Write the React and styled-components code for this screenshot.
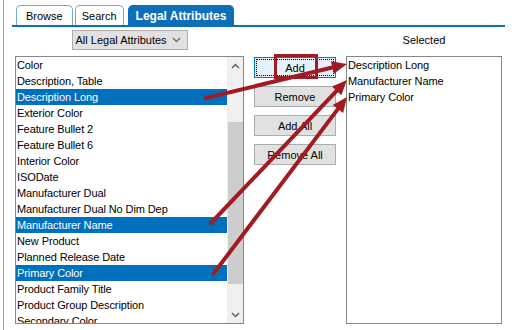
import React from 'react';
import styled, { createGlobalStyle, css } from 'styled-components';

const GlobalStyle = createGlobalStyle`
  body {
    margin: 0;
    background: #fff;
    font-family: "Liberation Sans", Arial, sans-serif;
    color: #000;
  }
`;

const Page = styled.div`
  position: relative;
  width: 512px;
  height: 330px;
  overflow: hidden;
  background: #fff;
`;

const Frame = styled.div`
  margin-left: 3px;
  height: 330px;
  border-left: 1px solid #a0a0a0;
`;

const TabBar = styled.div`
  display: flex;
  align-items: flex-end;
  gap: 2px;
  margin: 0 7px 0 8px;
  padding: 5px 0 0 4px;
  border-bottom: 2px solid #0d6fb8;
`;

const Tab = styled.div`
  height: 19px;
  padding: 0 ${({ $pad }) => $pad}px;
  display: flex;
  align-items: center;
  border: 1px solid #7aa7d2;
  border-bottom: none;
  border-radius: 5px 5px 0 0;
  background: #fff;
  font-size: 11px;
  ${({ $active }) =>
    $active &&
    css`
      margin-left: 2px;
      background: #0d6fb8;
      border-color: #0d6fb8;
      color: #fff;
      font-weight: 700;
      font-size: 12px;
    `}
`;

const Content = styled.div`
  display: grid;
  grid-template-columns: 229px 82px 156px;
  column-gap: 10px;
  row-gap: 6px;
  padding: 3px 0 0 11px;
`;

const Dropdown = styled.div`
  justify-self: center;
  width: 116px;
  height: 20px;
  box-sizing: border-box;
  display: flex;
  align-items: center;
  justify-content: space-between;
  padding: 0 6px 0 3px;
  border: 1px solid #adadad;
  background: #e1e1e1;
  font-size: 11px;
`;

const Caption = styled.div`
  justify-self: center;
  line-height: 20px;
  font-size: 11px;
`;

const ListBox = styled.div`
  height: 268px;
  box-sizing: border-box;
  display: flex;
  border: 1px solid #828790;
  background: #fff;
  overflow: hidden;
`;

const Items = styled.div`
  flex: 1;
  min-width: 0;
`;

const Item = styled.div`
  height: 16px;
  line-height: 16px;
  padding-left: 1px;
  font-size: 11px;
  letter-spacing: -0.1px;
  white-space: nowrap;
  ${({ $selected }) =>
    $selected &&
    css`
      background: #0070bd;
      color: #fff;
    `}
`;

const ScrollBar = styled.div`
  width: 16px;
  display: flex;
  flex-direction: column;
  background: #f0f0f0;
`;

const ScrollArrow = styled.div`
  height: 17px;
  display: flex;
  align-items: center;
  justify-content: center;
`;

const Track = styled.div`
  flex: 1;
  display: flex;
  flex-direction: column;
  align-items: center;
`;

const Thumb = styled.div`
  width: 15px;
  background: #cdcdcd;
`;

const ButtonColumn = styled.div`
  display: flex;
  flex-direction: column;
  gap: 8px;
  padding-top: 1px;
`;

const Button = styled.div`
  height: 21px;
  box-sizing: border-box;
  display: flex;
  align-items: center;
  justify-content: center;
  border: 1px solid #adadad;
  background: #e1e1e1;
  font-size: 11px;
  ${({ $focused }) =>
    $focused &&
    css`
      border-color: #0078d7;
      background: #e5f1fb;
      outline: 1px dotted #000;
      outline-offset: -3px;
    `}
`;

const Overlay = styled.svg`
  position: absolute;
  left: 0;
  top: 0;
  pointer-events: none;
`;

const available = [
  'Color',
  'Description, Table',
  'Description Long',
  'Exterior Color',
  'Feature Bullet 2',
  'Feature Bullet 6',
  'Interior Color',
  'ISODate',
  'Manufacturer Dual',
  'Manufacturer Dual No Dim Dep',
  'Manufacturer Name',
  'New Product',
  'Planned Release Date',
  'Primary Color',
  'Product Family Title',
  'Product Group Description',
  'Secondary Color',
];

const picked = ['Description Long', 'Manufacturer Name', 'Primary Color'];

const arrows = [
  [206, 98, 347, 64],
  [211, 223, 347, 80],
  [214, 273, 347, 97],
];

const RED = '#a11b22';

function Chevron({ up, color = '#606060' }) {
  return (
    <svg width="9" height="6" viewBox="0 0 9 6">
      <polyline
        points={up ? '1,5 4.5,1.5 8,5' : '1,1 4.5,4.5 8,1'}
        fill="none"
        stroke={color}
        strokeWidth="1.5"
      />
    </svg>
  );
}

function Arrow({ x1, y1, x2, y2 }) {
  const dx = x2 - x1;
  const dy = y2 - y1;
  const len = Math.hypot(dx, dy);
  const ux = dx / len;
  const uy = dy / len;
  const head = 15;
  const half = 6.5;
  const bx = x2 - ux * head;
  const by = y2 - uy * head;
  const pts = [
    `${x2},${y2}`,
    `${bx - uy * half},${by + ux * half}`,
    `${bx + uy * half},${by - ux * half}`,
  ].join(' ');
  return (
    <g>
      <line x1={x1} y1={y1} x2={bx + ux * 2} y2={by + uy * 2} stroke={RED} strokeWidth="4" strokeLinecap="round" />
      <polygon points={pts} fill={RED} />
    </g>
  );
}

export default function App() {
  return (
    <Page>
      <GlobalStyle />
      <Frame>
        <TabBar>
          <Tab $pad={9}>Browse</Tab>
          <Tab $pad={6}>Search</Tab>
          <Tab $active $pad={7}>Legal Attributes</Tab>
        </TabBar>

        <Content>
          <Dropdown>
            All Legal Attributes
            <Chevron color="#707070" />
          </Dropdown>
          <div />
          <Caption>Selected</Caption>

          <ListBox>
            <Items>
              {available.map((name) => (
                <Item key={name} $selected={picked.includes(name)}>
                  {name}
                </Item>
              ))}
            </Items>
            <ScrollBar>
              <ScrollArrow>
                <Chevron up />
              </ScrollArrow>
              <Track>
                <Thumb style={{ marginTop: 48, height: 162 }} />
              </Track>
              <ScrollArrow>
                <Chevron />
              </ScrollArrow>
            </ScrollBar>
          </ListBox>

          <ButtonColumn>
            <Button $focused>Add</Button>
            <Button>Remove</Button>
            <Button>Add All</Button>
            <Button>Remove All</Button>
          </ButtonColumn>

          <ListBox>
            <Items>
              {picked.map((name) => (
                <Item key={name}>{name}</Item>
              ))}
            </Items>
          </ListBox>
        </Content>
      </Frame>

      <Overlay width="512" height="330" viewBox="0 0 512 330">
        <rect x="275.5" y="55.5" width="41" height="22" fill="none" stroke={RED} strokeWidth="3" />
        {arrows.map(([x1, y1, x2, y2], i) => (
          <Arrow key={i} x1={x1} y1={y1} x2={x2} y2={y2} />
        ))}
      </Overlay>
    </Page>
  );
}
